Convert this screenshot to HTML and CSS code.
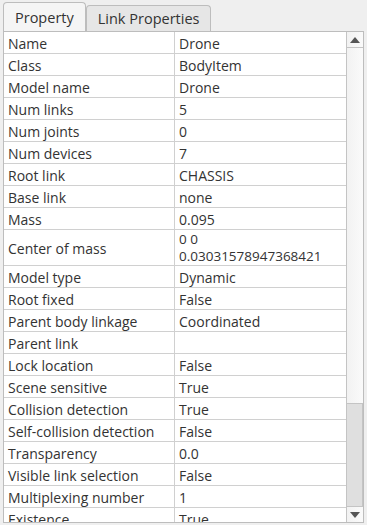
FILE: index.html
```html
<!DOCTYPE html>
<html lang="en">

<head>
    <meta charset="UTF-8">
    <meta name="viewport" content="width=device-width, initial-scale=1.0">
    <title>Properties</title>
    <link rel="stylesheet" href="styles.css">
</head>

<body>
    <div class="tabs">
        <div class="tab active">Property</div>
        <div class="tab">Link Properties</div>
    </div>

    <div class="panel">
        <div class="table">
            <div class="row"><div class="cell">Name</div><div class="cell">Drone</div></div>
            <div class="row"><div class="cell">Class</div><div class="cell">BodyItem</div></div>
            <div class="row"><div class="cell">Model name</div><div class="cell">Drone</div></div>
            <div class="row"><div class="cell">Num links</div><div class="cell">5</div></div>
            <div class="row"><div class="cell">Num joints</div><div class="cell">0</div></div>
            <div class="row"><div class="cell">Num devices</div><div class="cell">7</div></div>
            <div class="row"><div class="cell">Root link</div><div class="cell">CHASSIS</div></div>
            <div class="row"><div class="cell">Base link</div><div class="cell">none</div></div>
            <div class="row"><div class="cell">Mass</div><div class="cell">0.095</div></div>
            <div class="row tall">
                <div class="cell">Center of mass</div>
                <div class="cell multi"><span>0 0</span><span>0.03031578947368421</span></div>
            </div>
            <div class="row"><div class="cell">Model type</div><div class="cell">Dynamic</div></div>
            <div class="row"><div class="cell">Root fixed</div><div class="cell">False</div></div>
            <div class="row"><div class="cell">Parent body linkage</div><div class="cell">Coordinated</div></div>
            <div class="row"><div class="cell">Parent link</div><div class="cell"></div></div>
            <div class="row"><div class="cell">Lock location</div><div class="cell">False</div></div>
            <div class="row"><div class="cell">Scene sensitive</div><div class="cell">True</div></div>
            <div class="row"><div class="cell">Collision detection</div><div class="cell">True</div></div>
            <div class="row"><div class="cell">Self-collision detection</div><div class="cell">False</div></div>
            <div class="row"><div class="cell">Transparency</div><div class="cell">0.0</div></div>
            <div class="row"><div class="cell">Visible link selection</div><div class="cell">False</div></div>
            <div class="row"><div class="cell">Multiplexing number</div><div class="cell">1</div></div>
            <div class="row"><div class="cell">Existence</div><div class="cell">True</div></div>
        </div>

        <div class="scrollbar">
            <div class="arrow">
                <svg width="10" height="6" viewBox="0 0 10 6"><polygon points="0,6 10,6 5,0" fill="#555"/></svg>
            </div>
            <div class="track"></div>
            <div class="thumb"></div>
            <div class="arrow">
                <svg width="10" height="6" viewBox="0 0 10 6"><polygon points="0,0 10,0 5,6" fill="#555"/></svg>
            </div>
        </div>
    </div>
</body>

</html>
```

FILE: styles.css
```css
body,
html {
    margin: 0;
    padding: 0;
    height: 100%;
    background: #efefef;
    font-family: 'Open Sans', 'Noto Sans', sans-serif;
    font-size: 14px;
    color: #333;
    overflow: hidden;
}

.tabs {
    display: flex;
    padding: 3px 0 0 3px;
    height: 28px;
    align-items: flex-end;
}

.tab {
    height: 25px;
    line-height: 25px;
    padding: 0 11px;
    background: #e6e6e6;
    border: 1px solid #bdbdbd;
    border-bottom: none;
    border-radius: 4px 4px 0 0;
    font-size: 14.5px;
}

.tab.active {
    height: 28px;
    line-height: 29px;
    background: #f5f5f5;
    padding: 0 11px;
}

.panel {
    display: flex;
    margin: 0 3px 0 3px;
    height: 490px;
    border: 1px solid #bdbdbd;
    background: #fff;
    overflow: hidden;
}

.table {
    flex: 1;
}

.row {
    display: grid;
    grid-template-columns: 171px 1fr;
    height: 22px;
    border-bottom: 1px solid #d0d0d0;
    box-sizing: border-box;
}

.row.tall {
    height: 36px;
}

.cell {
    padding: 1px 4px 0;
    display: flex;
    align-items: center;
    line-height: 17px;
    white-space: nowrap;
    overflow: hidden;
}

.cell:first-child {
    border-right: 1px solid #d0d0d0;
}

.cell.multi {
    flex-direction: column;
    align-items: flex-start;
    justify-content: center;
    padding: 0 4px;
    font-size: 13.5px;
    line-height: 17px;
}

.scrollbar {
    width: 16px;
    display: flex;
    flex-direction: column;
    border-left: 1px solid #c4c4c4;
    background: linear-gradient(90deg, #f2f2f2, #fafafa);
}

.arrow {
    height: 15px;
    display: flex;
    align-items: center;
    justify-content: center;
    border-bottom: 1px solid #c4c4c4;
}

.arrow:last-child {
    border-bottom: none;
    border-top: 1px solid #c4c4c4;
}

.track {
    flex: 1;
}

.thumb {
    height: 102px;
    background: #dfdfdf;
    border-top: 1px solid #c4c4c4;
    border-right: 1px solid #c4c4c4;
}
```
